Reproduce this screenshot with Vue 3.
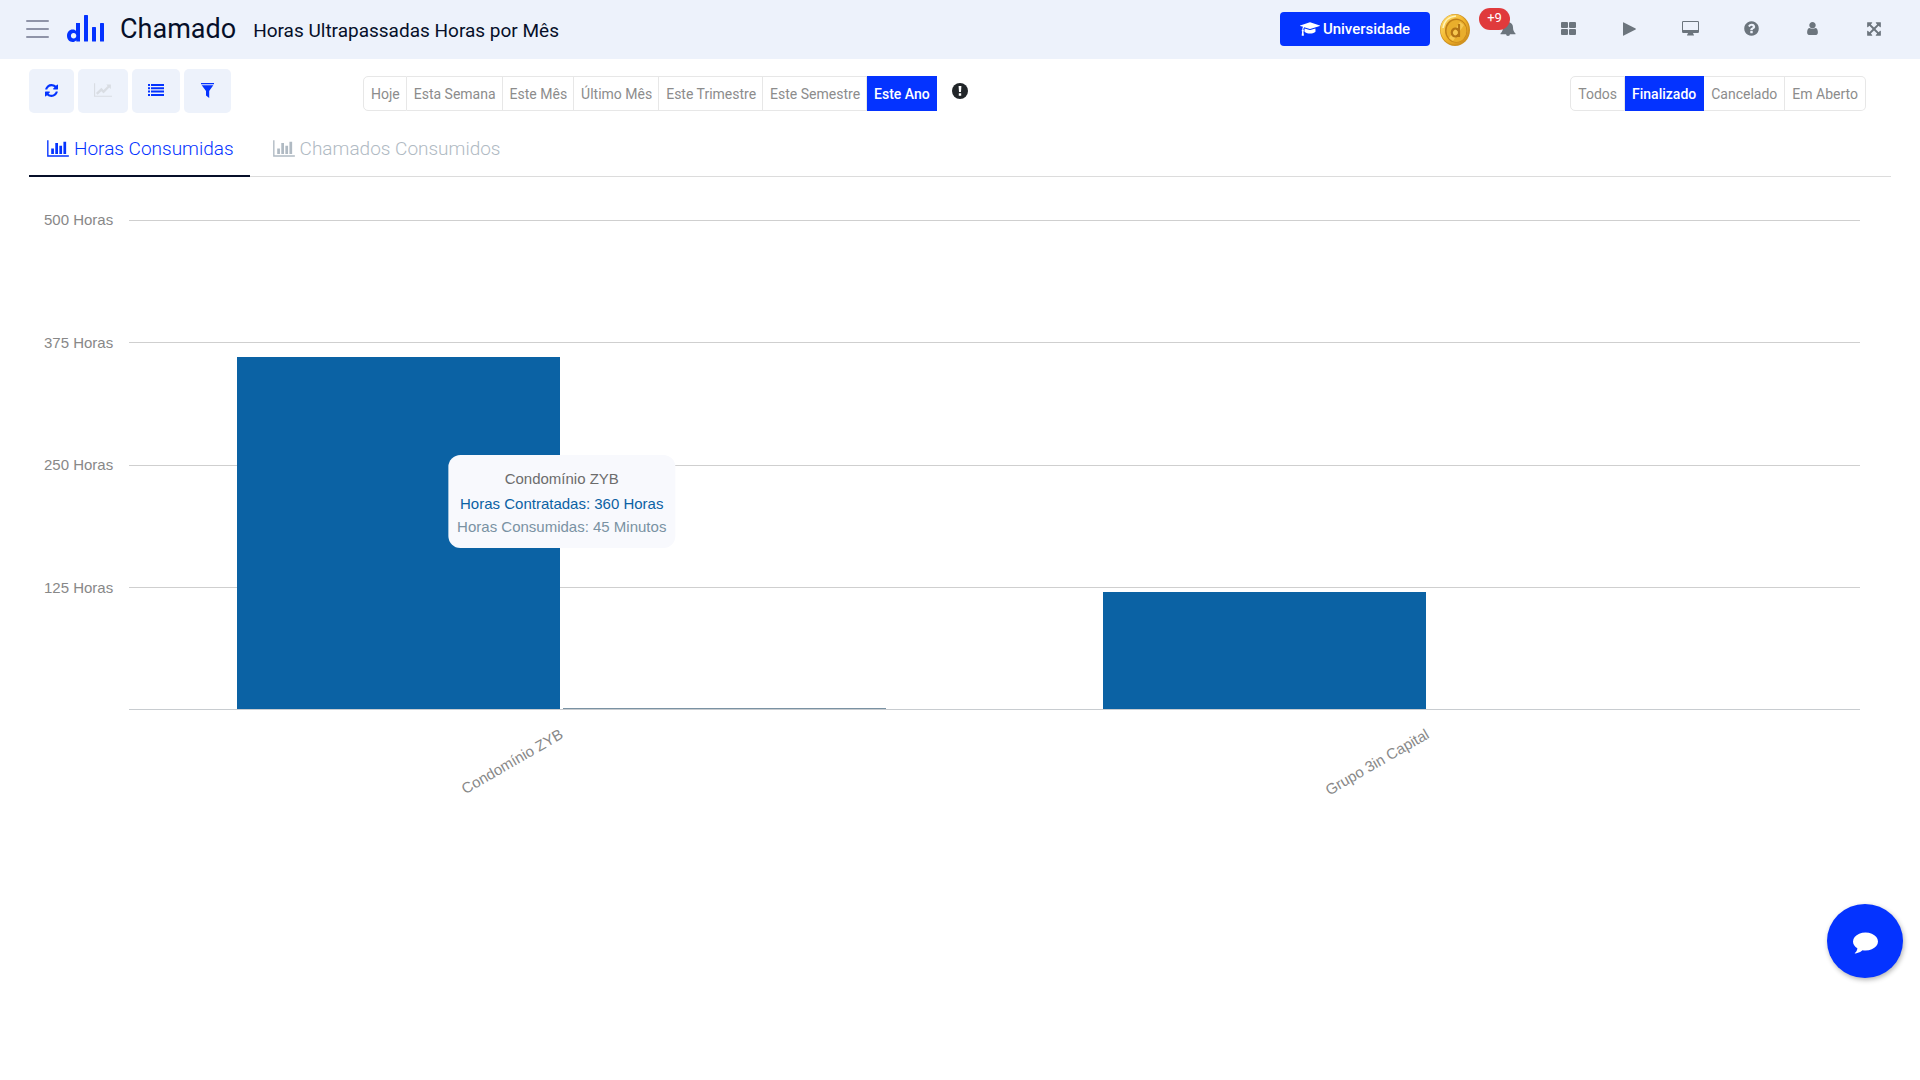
<script setup>
import { ref } from 'vue'

const periods = ['Hoje', 'Esta Semana', 'Este Mês', 'Último Mês', 'Este Trimestre', 'Este Semestre', 'Este Ano']
const statuses = ['Todos', 'Finalizado', 'Cancelado', 'Em Aberto']
const period = ref('Este Ano')
const status = ref('Finalizado')
const tab = ref(0)
const tabs = ['Horas Consumidas', 'Chamados Consumidos']

const max = 500
const ticks = [500, 375, 250, 125]
const clients = [
  { name: 'Condomínio ZYB', contracted: 360, consumed: 0.75 },
  { name: 'Grupo 3in Capital', contracted: 120, consumed: 0 },
]
const barHeight = (hours) => ({ height: (hours / max) * 100 + '%' })

const barChart = 'M640 896v512h-256v-512h256zm384-512v1024h-256v-1024h256zm1024 1152v128h-2048v-1536h128v1408h1920zm-640-896v768h-256v-768h256zm384-384v1152h-256v-1152h256z'
</script>

<template>
  <div class="page">
    <header class="topbar">
      <button class="menu" type="button" aria-label="Menu"><i></i><i></i><i></i></button>
      <a class="logo" href="#" aria-label="Início">
        <svg width="37" height="27" viewBox="0 0 37 27" fill="#0433ff">
          <path d="M9 8h4v18.500H9.300V25.200C8.300 26.400 7.200 27 5.600 27 2.400 27 0 24.300 0 20.800s2.400-6.200 5.600-6.200c1.400 0 2.500.4 3.400 1.300zM6.600 18c-1.600 0-2.700 1.200-2.700 2.800s1.100 2.800 2.700 2.800S9.300 22.400 9.300 20.800 8.200 18 6.600 18z" />
          <rect x="17" y="0" width="4" height="26.500" rx=".6" />
          <rect x="25" y="12" width="4" height="14.500" rx=".6" />
          <rect x="33" y="8" width="4" height="18.500" rx=".6" />
        </svg>
      </a>
      <h1>Chamado</h1>
      <h2>Horas Ultrapassadas Horas por Mês</h2>

      <nav class="actions">
        <button class="university" type="button">
          <svg width="20" height="16" viewBox="0 0 2304 1792" fill="currentColor"><path d="M1774 836l18 316q4 69-82 128t-235 93.500-323 34.500-323-34.500-235-93.500-82-128l18-316 574 181q22 7 48 7t48-7zm530-324q0 23-22 31l-1120 352q-4 1-10 1t-10-1l-652-206q-43 34-71 111.500t-34 178.500q63 36 63 109 0 69-58 107l58 433q2 14-8 25-9 11-24 11h-192q-15 0-24-11-10-11-8-25l58-433q-58-38-58-107 0-73 65-111 11-207 98-330l-333-104q-22-8-22-31t22-31l1120-352q4-1 10-1t10 1l1120 352q22 8 22 31z" /></svg>
          Universidade
        </button>
        <button class="coin" type="button" aria-label="Moedas">
          <svg width="30" height="32" viewBox="0 0 30 32">
            <defs>
              <linearGradient id="gold" x1="0" y1="0" x2="1" y2="1">
                <stop offset="0" stop-color="#ffe27a" />
                <stop offset=".5" stop-color="#f2b52a" />
                <stop offset="1" stop-color="#c98416" />
              </linearGradient>
            </defs>
            <ellipse cx="15" cy="16" rx="15" ry="16" fill="#cf9220" />
            <ellipse cx="14.500" cy="15.500" rx="14" ry="15" fill="url(#gold)" />
            <path d="M3 14C4 7 9 2.500 16 2" fill="none" stroke="#fff3b8" stroke-width="1.500" />
            <ellipse cx="16" cy="16.500" rx="11" ry="12" fill="#c08018" />
            <ellipse cx="16.500" cy="17" rx="10" ry="11" fill="#e9ae2c" />
            <path d="M9 24 20 8l4 3L13 27z" fill="#f6c850" />
            <path d="M19 10v13M18.500 20a3.500 4 0 1 1 0-3" fill="none" stroke="#b37414" stroke-width="2.200" />
          </svg>
        </button>
        <button class="item" type="button" aria-label="Notificações">
          <svg width="16" height="16" viewBox="0 0 16 16" fill="currentColor"><path d="M8 0a1.200 1.200 0 0 1 1.200 1.300C11.500 1.800 13 3.700 13 6.200c0 3 .8 4.600 2.500 6.200v.9H.5v-.9C2.200 10.800 3 9.200 3 6.200c0-2.500 1.500-4.400 3.800-4.900A1.200 1.200 0 0 1 8 0zM6 13h4a2 2 0 0 1-4 0z" /></svg>
          <span class="badge">+9</span>
        </button>
        <button class="item" type="button" aria-label="Painéis">
          <svg width="15" height="13" viewBox="0 0 15 13" fill="currentColor"><rect width="7" height="6" rx="1" /><rect x="8" width="7" height="6" rx="1" /><rect y="7" width="7" height="6" rx="1" /><rect x="8" y="7" width="7" height="6" rx="1" /></svg>
        </button>
        <button class="item" type="button" aria-label="Iniciar">
          <svg width="13" height="14" viewBox="0 0 13 14" fill="currentColor"><path d="M0 .8Q0 0 .8.400l11.800 6.200q.6.400 0 .8L.8 13.600Q0 14 0 13.200z" /></svg>
        </button>
        <button class="item" type="button" aria-label="Monitor">
          <svg width="17" height="15" viewBox="0 0 17 15" fill="currentColor"><path fill-rule="evenodd" d="M1.300 0h14.400Q17 0 17 1.300v9.400Q17 12 15.700 12H11l.6 1.400q.4.300.4.800 0 .4-.5.400h-6q-.5 0-.5-.4 0-.5.4-.8L6 12H1.300Q0 12 0 10.700V1.300Q0 0 1.300 0zM1 1.200v7.600q0 .3.300.3h14.400q.3 0 .3-.3V1.200Q16 1 15.700 1H1.300Q1 1 1 1.200z" /></svg>
        </button>
        <button class="item" type="button" aria-label="Ajuda">
          <svg width="17" height="17" viewBox="0 0 1792 1792" fill="currentColor"><path d="M1024 1376v-192q0-14-9-23t-23-9h-192q-14 0-23 9t-9 23v192q0 14 9 23t23 9h192q14 0 23-9t9-23zm256-672q0-88-55.500-163t-138.500-116-170-41q-243 0-371 213-15 24 8 42l132 100q7 6 19 6 16 0 25-12 53-68 86-92 34-24 86-24 48 0 85.500 26t37.500 59q0 38-20 61t-68 45q-63 28-115.500 86.500t-52.500 125.500v36q0 14 9 23t23 9h192q14 0 23-9t9-23q0-19 21.500-49.500t54.500-49.500q32-18 49-28.500t46-35 44.500-48 28-60.500 12.500-81zm384 192q0 209-103 385.500t-279.500 279.500-385.500 103-385.500-103-279.500-279.500-103-385.500 103-385.500 279.500-279.500 385.500-103 385.500 103 279.500 279.500 103 385.500z" /></svg>
        </button>
        <button class="item" type="button" aria-label="Perfil">
          <svg width="15" height="15" viewBox="0 0 1792 1792" fill="currentColor"><path d="M1536 1399q0 109-62.500 187t-150.500 78h-854q-88 0-150.500-78t-62.500-187q0-85 8.500-160.500t31.500-152 58.500-131 94-89 134.500-34.500q131 128 313 128t313-128q76 0 134.500 34.500t94 89 58.500 131 31.500 152 8.500 160.500zm-256-887q0 159-112.500 271.500t-271.500 112.500-271.500-112.500-112.500-271.500 112.500-271.500 271.500-112.500 271.500 112.500 112.500 271.500z" /></svg>
        </button>
        <button class="item" type="button" aria-label="Tela cheia">
          <svg width="16" height="16" viewBox="0 0 1792 1792" fill="currentColor"><path d="M1411 541l-355 355 355 355 144-144q29-31 70-14 39 17 39 59v448q0 26-19 45t-45 19h-448q-42 0-59-40-17-39 14-69l144-144-355-355-355 355 144 144q31 30 14 69-17 40-59 40h-448q-26 0-45-19t-19-45v-448q0-42 40-59 39-17 69 14l144 144 355-355-355-355-144 144q-19 19-45 19-12 0-24-5-40-17-40-59v-448q0-26 19-45t45-19h448q42 0 59 40 17 39-14 69l-144 144 355 355 355-355-144-144q-31-30-14-69 17-40 59-40h448q26 0 45 19t19 45v448q0 42-39 59-13 5-25 5-26 0-45-19z" /></svg>
        </button>
      </nav>
    </header>

    <section class="toolbar">
      <div class="tools">
        <button type="button" aria-label="Atualizar">
          <svg width="13" height="13" viewBox="128 128 1536 1536" fill="currentColor"><path d="M1639 1056q0 5-1 7-64 268-268 434.500t-478 166.500q-146 0-282.500-55t-243.500-157l-129 129q-19 19-45 19t-45-19-19-45v-448q0-26 19-45t45-19h448q26 0 45 19t19 45-19 45l-137 137q71 66 161 102t187 36q134 0 250-65t186-179q11-17 53-117 8-23 30-23h192q13 0 22.500 9.500t9.500 22.500zm25-800v448q0 26-19 45t-45 19h-448q-26 0-45-19t-19-45 19-45l138-138q-148-137-349-137-134 0-250 65t-186 179q-11 17-53 117-8 23-30 23h-199q-13 0-22.500-9.500t-9.500-22.500v-7q65-268 270-434.500t480-166.500q146 0 284 55.500t245 156.500l130-129q19-19 45-19t45 19 19 45z" /></svg>
        </button>
        <button type="button" aria-label="Gráfico" disabled>
          <svg width="18" height="16" viewBox="0 0 2048 1792" fill="currentColor"><path d="M2048 1536v128h-2048v-1536h128v1408h1920zm-128-1248v435q0 21-19.500 29.500t-35.500-7.500l-121-121-633 633q-10 10-23 10t-23-10l-233-233-416 416-192-192 585-585q10-10 23-10t23 10l233 233 464-464-121-121q-16-16-7.500-35.500t29.500-19.500h435q14 0 23 9t9 23z" /></svg>
        </button>
        <button type="button" aria-label="Lista">
          <svg width="16" height="12" viewBox="0 0 16 12" fill="currentColor"><path d="M0 0h2v2H0zM3 0h13v2H3zM0 3.300h2v2H0zM3 3.300h13v2H3zM0 6.600h2v2H0zM3 6.600h13v2H3zM0 10h2v2H0zM3 10h13v2H3z" /></svg>
        </button>
        <button type="button" aria-label="Filtro">
          <svg width="15" height="15" viewBox="-1 0 15 15" fill="currentColor"><path d="M0 0h13v1.200H0zM.7 2.200h11.600L8.200 8v7L5 12.500V8z" /></svg>
        </button>
      </div>
      <div class="period">
        <div class="segments">
          <button v-for="p in periods" :key="p" type="button" :class="{ active: p === period }" @click="period = p">{{ p }}</button>
        </div>
        <svg width="16" height="16" viewBox="0 0 16 16"><circle cx="8" cy="8" r="8" fill="#212529" /><path d="M6.600 3h2.800L9 9H7zM6.800 10.300h2.400v2.400H6.800z" fill="#fff" /></svg>
      </div>
      <div class="segments wide">
        <button v-for="s in statuses" :key="s" type="button" :class="{ active: s === status }" @click="status = s">{{ s }}</button>
      </div>
    </section>

    <nav class="tabs">
      <button v-for="(t, i) in tabs" :key="t" type="button" :class="{ active: i === tab }" @click="tab = i">
        <svg width="22" height="19" viewBox="0 0 2048 1792" fill="currentColor"><path :d="barChart" /></svg>
        {{ t }}
      </button>
    </nav>

    <main class="chart">
      <div class="scale">
        <span v-for="t in ticks" :key="t">{{ t }} Horas</span>
      </div>
      <div class="plot">
        <div class="grid">
          <div v-for="t in ticks" :key="t"></div>
        </div>
        <div v-for="c in clients" :key="c.name" class="group">
          <div class="bar contracted" :style="barHeight(c.contracted)"></div>
          <div class="bar consumed" :style="barHeight(c.consumed)"></div>
        </div>
        <div class="tooltip">
          <strong>{{ clients[0].name }}</strong>
          <span class="hired">Horas Contratadas: 360 Horas</span>
          <span class="used">Horas Consumidas: 45 Minutos</span>
        </div>
      </div>
      <div class="names">
        <div v-for="c in clients" :key="c.name"><span>{{ c.name }}</span></div>
      </div>
    </main>

    <button class="chat" type="button" aria-label="Chat">
      <svg width="25" height="25" viewBox="0 0 1792 1792" fill="currentColor"><path d="M1792 896q0 174-120 321.500t-326 233-450 85.500q-110 0-211-18-173 173-435 229-52 10-86 13-12 1-22-6t-13-18q-4-15 20-37 5-5 23.500-21.500t25.500-23.500 23.500-25.500 24-31.500 20.500-37 20-48 14.500-57.500 12.500-72.500q-146-90-229.500-216.500t-83.500-269.500q0-174 120-321.500t326-233 450-85.500 450 85.500 326 233 120 321.500z" /></svg>
    </button>
  </div>
</template>

<style>
body {
  margin: 0;
  background: #fff;
}
</style>

<style scoped>
.page {
  min-height: 100vh;
  font-family: Roboto, "Liberation Sans", sans-serif;
  color: #060f29;
}
button {
  box-sizing: border-box;
  margin: 0;
  padding: 0;
  border: 0;
  background: none;
  font: inherit;
  color: inherit;
  cursor: pointer;
}
svg {
  display: block;
  flex: none;
}
.topbar {
  display: flex;
  align-items: center;
  box-sizing: border-box;
  height: 59px;
  padding: 0 16px 2px 26px;
  background: #edf2fb;
}
.menu {
  display: flex;
  flex-direction: column;
  gap: 6px;
  width: 23px;
  margin-right: 18px;
}
.menu i {
  height: 2px;
  border-radius: 1px;
  background: #8f94a8;
}
.logo {
  margin-right: 16px;
}
h1,
h2 {
  margin: 0;
  font-weight: 400;
  white-space: nowrap;
}
h1 {
  margin-right: 17px;
  font-size: 27px;
  line-height: 32px;
}
h2 {
  padding-top: 5px;
  font-size: 19px;
  line-height: 24px;
}
.actions {
  display: flex;
  align-items: center;
  margin-left: auto;
  color: #6c757d;
}
.university {
  display: flex;
  align-items: center;
  justify-content: center;
  gap: 3px;
  width: 150px;
  height: 34px;
  margin-right: 10px;
  border-radius: 4px;
  background: #0433ff;
  color: #fff;
  font-size: 15px;
  font-weight: 500;
}
.coin {
  padding-top: 2px;
  margin-right: 7px;
}
.item {
  position: relative;
  display: flex;
  align-items: center;
  justify-content: center;
  width: 61px;
  height: 57px;
}
.badge {
  position: absolute;
  top: 8px;
  left: 2px;
  width: 31px;
  height: 22px;
  border-radius: 11px;
  background: #e03a3c;
  color: #fff;
  font-size: 13px;
  line-height: 20px;
}
.toolbar {
  display: grid;
  grid-template-columns: 334px 1fr auto;
  align-items: center;
  padding: 10px 54px 0 29px;
}
.tools {
  display: flex;
  gap: 4px;
}
.tools button {
  display: flex;
  align-items: center;
  justify-content: center;
  height: 44px;
  padding: 0 16px 2px;
  border-radius: 5px;
  background: #edf2fb;
  color: #0433ff;
}
.tools button:disabled {
  color: #d9dde3;
}
.period {
  display: flex;
  align-items: center;
  gap: 15px;
}
.segments {
  display: flex;
  padding-top: 5px;
  color: #8c8c8c;
  font-size: 14px;
}
.segments button {
  height: 35px;
  padding: 0 6px 0 7px;
  border: 1px solid #e7e7e7;
  border-left-width: 0;
  white-space: nowrap;
}
.segments.wide button {
  padding: 0 7px;
}
.segments button:first-child {
  border-left-width: 1px;
  border-radius: 5px 0 0 5px;
}
.segments.wide button:last-child {
  border-radius: 0 5px 5px 0;
}
.segments button.active {
  border-color: #0433ff;
  background: #0433ff;
  color: #fff;
  font-weight: 500;
}
.tabs {
  display: flex;
  gap: 5px;
  margin: 7px 29px 0;
  border-bottom: 1px solid #dcdcdc;
}
.tabs button {
  display: flex;
  align-items: center;
  gap: 5px;
  height: 57px;
  margin-bottom: -1px;
  padding: 2px 16px 0 18px;
  border-bottom: 2px solid transparent;
  color: #b0bac3;
  font-size: 19px;
  font-weight: 300;
}
.tabs button.active {
  border-bottom-color: #060f29;
  color: #0433ff;
}
.chart {
  display: grid;
  grid-template-columns: 69px 1fr;
  grid-template-rows: 490px auto;
  column-gap: 16px;
  padding: 43px 60px 0 44px;
  font-family: "Liberation Sans", Arial, sans-serif;
  font-size: 15px;
  color: #888;
}
.scale {
  display: flex;
  flex-direction: column;
}
.scale span {
  flex: 1;
  margin-top: -9px;
  padding-bottom: 9px;
  line-height: 18px;
  text-align: right;
  white-space: nowrap;
}
.plot {
  position: relative;
  display: flex;
  border-bottom: 1px solid #c8ccd0;
}
.grid {
  position: absolute;
  inset: 0;
  display: flex;
  flex-direction: column;
}
.grid div {
  flex: 1;
  border-top: 1px solid #cfcfcf;
}
.group {
  position: relative;
  display: flex;
  flex: 1;
  align-items: flex-end;
  gap: 3px;
  box-sizing: border-box;
  padding: 0 6.25%;
}
.bar {
  flex: 1;
}
.contracted {
  background: #0b62a4;
}
.consumed {
  background: #7a92a3;
}
.tooltip {
  position: absolute;
  top: 235px;
  left: 25%;
  display: flex;
  flex-direction: column;
  padding: 12px 9px 10px;
  border-radius: 12px;
  background: #f8f9fd;
  line-height: 23px;
  text-align: center;
  white-space: nowrap;
  transform: translateX(-50%);
}
.tooltip strong {
  margin-bottom: 2px;
  color: #6c6c6c;
  font-weight: 400;
}
.hired {
  color: #0b62a4;
}
.used {
  color: #7a92a3;
}
.names {
  display: flex;
  grid-column: 2;
  padding: 14px 0 70px;
}
.names div {
  flex: 1;
}
.names span {
  display: block;
  width: 50%;
  line-height: 18px;
  text-align: right;
  transform: rotate(-30deg);
  transform-origin: right center;
}
.chat {
  position: fixed;
  right: 17px;
  bottom: 102px;
  display: flex;
  align-items: center;
  justify-content: center;
  width: 76px;
  height: 74px;
  border-radius: 50%;
  background: #0433ff;
  color: #fff;
  box-shadow: 1px 2px 5px rgba(0, 0, 0, 0.3);
}
</style>
